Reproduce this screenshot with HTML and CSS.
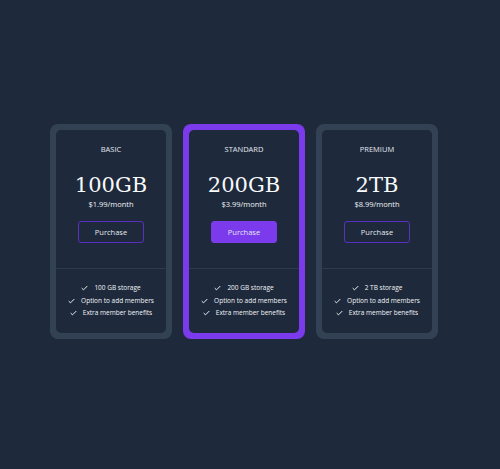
FILE: index.html
```html
<!DOCTYPE html>
<html lang="en">
<head>
    <meta charset="UTF-8">
    <meta name="viewport" content="width=device-width, initial-scale=1.0">
    <title>Storage Plans</title>
    <link rel="stylesheet" href="styles.css">
</head>
<body>
    <div class="plans">
        <div class="plan">
            <div class="plan-inner">
                <div class="plan-head">
                    <div class="plan-name">BASIC</div>
                    <div class="plan-size">100GB</div>
                    <div class="plan-price">$1.99/month</div>
                    <button class="buy">Purchase</button>
                </div>
                <ul class="features">
                    <li><svg viewBox="0 0 10 8"><path d="M1 4.2 3.6 6.6 9 1.2"/></svg>100 GB storage</li>
                    <li><svg viewBox="0 0 10 8"><path d="M1 4.2 3.6 6.6 9 1.2"/></svg>Option to add members</li>
                    <li><svg viewBox="0 0 10 8"><path d="M1 4.2 3.6 6.6 9 1.2"/></svg>Extra member benefits</li>
                </ul>
            </div>
        </div>
        <div class="plan featured">
            <div class="plan-inner">
                <div class="plan-head">
                    <div class="plan-name">STANDARD</div>
                    <div class="plan-size">200GB</div>
                    <div class="plan-price">$3.99/month</div>
                    <button class="buy">Purchase</button>
                </div>
                <ul class="features">
                    <li><svg viewBox="0 0 10 8"><path d="M1 4.2 3.6 6.6 9 1.2"/></svg>200 GB storage</li>
                    <li><svg viewBox="0 0 10 8"><path d="M1 4.2 3.6 6.6 9 1.2"/></svg>Option to add members</li>
                    <li><svg viewBox="0 0 10 8"><path d="M1 4.2 3.6 6.6 9 1.2"/></svg>Extra member benefits</li>
                </ul>
            </div>
        </div>
        <div class="plan">
            <div class="plan-inner">
                <div class="plan-head">
                    <div class="plan-name">PREMIUM</div>
                    <div class="plan-size">2TB</div>
                    <div class="plan-price">$8.99/month</div>
                    <button class="buy">Purchase</button>
                </div>
                <ul class="features">
                    <li><svg viewBox="0 0 10 8"><path d="M1 4.2 3.6 6.6 9 1.2"/></svg>2 TB storage</li>
                    <li><svg viewBox="0 0 10 8"><path d="M1 4.2 3.6 6.6 9 1.2"/></svg>Option to add members</li>
                    <li><svg viewBox="0 0 10 8"><path d="M1 4.2 3.6 6.6 9 1.2"/></svg>Extra member benefits</li>
                </ul>
            </div>
        </div>
    </div>
</body>
</html>
```

FILE: styles.css
```css
body {
    margin: 0;
    background-color: #1e293b;
    font-family: "Open Sans", Arial, sans-serif;
    color: #e2e8f0;
    height: 469px;
}

.plans {
    display: flex;
    gap: 11px;
    padding: 124px 0 0 50px;
}

.plan {
    width: 122px;
    padding: 6px;
    box-sizing: border-box;
    background-color: #334155;
    border-radius: 8px;
}

.plan.featured {
    background-color: #7c3aed;
}

.plan-inner {
    background-color: #1e293b;
    border-radius: 5px;
    text-align: center;
}

.plan-head {
    padding: 13px 0 25px;
    display: flex;
    flex-direction: column;
    align-items: center;
    border-bottom: 1px solid #2c3a4e;
}

.plan-name {
    font-size: 7.5px;
    line-height: 12px;
    color: #e2e8f0;
}

.plan-size {
    margin-top: 17px;
    font-family: "DejaVu Serif", Georgia, serif;
    font-size: 21px;
    line-height: 26px;
    color: #f8fafc;
}

.plan-price {
    font-size: 7.5px;
    line-height: 12px;
    color: #f1f5f9;
}

.buy {
    margin-top: 11px;
    width: 66px;
    height: 22px;
    padding: 0;
    font-family: "Open Sans", Arial, sans-serif;
    font-size: 7.5px;
    color: #e2e8f0;
    background: transparent;
    border: 1px solid #5b2fc2;
    border-radius: 3px;
}

.featured .buy {
    background-color: #7c3aed;
    border-color: #7c3aed;
}

.features {
    list-style: none;
    margin: 0;
    padding: 13px 0 13px;
}

.features li {
    display: flex;
    justify-content: center;
    align-items: center;
    gap: 6px;
    font-size: 6.5px;
    line-height: 12.5px;
    color: #f1f5f9;
}

.features svg {
    width: 7px;
    height: 6px;
    fill: none;
    stroke: #f1f5f9;
    stroke-width: 1.4;
}
```
